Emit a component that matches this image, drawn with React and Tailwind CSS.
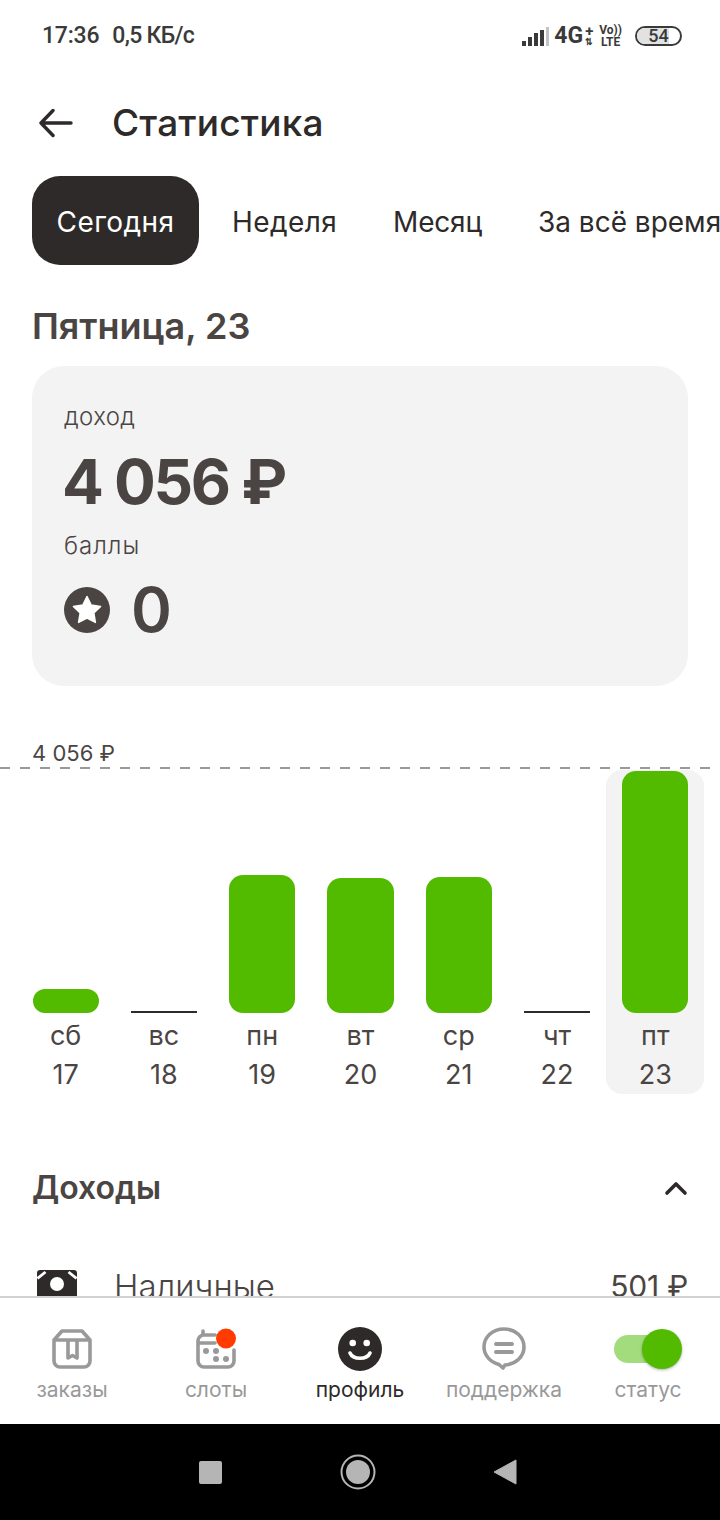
const FONT = "font-['Inter','Noto_Sans',sans-serif]";

function StatusBar() {
  return (
    <div className="h-[70px] pt-[1px] flex items-center justify-between pl-[42px] pr-[38px] text-[#3a3a3a] font-['Roboto',sans-serif]">
      <div className="flex gap-[13px] text-[23px] font-medium leading-none">
        <span className="tracking-[-0.2px]">17:36</span>
        <span className="tracking-[-0.7px]">0,5 КБ/с</span>
      </div>
      <div className="flex items-center">
        <svg width="28" height="20" viewBox="0 0 28 20" className="mr-[4px]">
          <rect x="0" y="15" width="4" height="5" fill="#3a3a3a" />
          <rect x="6" y="11" width="4" height="9" fill="#3a3a3a" />
          <rect x="12" y="7" width="4" height="13" fill="#3a3a3a" />
          <rect x="18" y="4" width="4" height="16" fill="#3a3a3a" />
          <rect x="24" y="1" width="3" height="19" fill="#c4c4c4" />
        </svg>
        <span className="text-[23px] font-bold leading-none">4G</span>
        <div className="flex flex-col items-center ml-[1px] w-[10px]">
          <span className="text-[15px] font-bold leading-[12px]">+</span>
          <span className="text-[9px] font-bold leading-[10px]">⇅</span>
        </div>
        <div className="flex flex-col items-center ml-[5px] text-[12px] font-bold leading-[12px]">
          <span>Vo))</span>
          <span>LTE</span>
        </div>
        <div className="relative ml-[13px] w-[47px] h-[20px] rounded-full border-2 border-[#3a3a3a] overflow-hidden flex items-center justify-center">
          <div className="absolute left-0 top-0 bottom-0 w-[32px] bg-[#e2e2e2]" />
          <span className="relative text-[18px] font-medium leading-none">54</span>
        </div>
      </div>
    </div>
  );
}

function Header() {
  return (
    <div className="h-[106px] flex items-center pl-[39px]">
      <svg width="34" height="30" viewBox="0 0 34 30" fill="none" stroke="#2d2a29" strokeWidth="3.4" strokeLinecap="round" strokeLinejoin="round">
        <path d="M2 15H32M14 2.500 2 15l12 12.500" />
      </svg>
      <h1 className="ml-[39px] mb-[2px] text-[37px] font-medium leading-none text-[#2d2a29] tracking-[0.2px]">Статистика</h1>
    </div>
  );
}

function Tabs() {
  return (
    <div className="flex items-center pl-[32px] gap-[9px] h-[89px] whitespace-nowrap text-[28px] tracking-[0.4px] text-[#2d2a29] overflow-hidden">
      <div className="h-[89px] w-[167px] shrink-0 flex items-center justify-center pt-[3px] rounded-[28px] bg-[#2d2a29] text-white">Сегодня</div>
      <div className="px-[24px] pt-[3px] shrink-0">Неделя</div>
      <div className="px-[24px] pt-[3px] shrink-0 -ml-[1px] tracking-[-0.2px]">Месяц</div>
      <div className="px-[24px] pt-[3px] shrink-0 -ml-[1px] tracking-[0px]">За всё время</div>
    </div>
  );
}

function Card() {
  return (
    <div className="mx-[32px] h-[320px] rounded-[32px] bg-[#f3f3f3] px-[32px] text-[#4a4543] flex flex-col">
      <div className="mt-[37px] h-[28px] text-[24px] font-light leading-[28px] tracking-[0.4px]">доход</div>
      <div className="mt-[16px] -ml-[2px] h-[70px] text-[62px] font-bold tracking-[-2.3px] leading-[70px]">4 056 ₽</div>
      <div className="mt-[15px] h-[28px] text-[24px] font-light leading-[28px] tracking-[1px]">баллы</div>
      <div className="mt-[17px] flex items-center">
        <svg width="46" height="46" viewBox="0 0 46 46">
          <circle cx="23" cy="23" r="23" fill="#4a4543" />
          <path d="M23 9.500l4.200 8.600 9.400 1.300-6.800 6.600 1.600 9.400-8.400-4.400-8.400 4.400 1.600-9.400-6.800-6.600 9.400-1.300z" fill="#fff" stroke="#fff" strokeWidth="1.500" strokeLinejoin="round" />
        </svg>
        <span className="ml-[21px] text-[62px] font-semibold leading-[66px]">0</span>
      </div>
    </div>
  );
}

const days = [
  { d: "сб", n: 17, h: 24 },
  { d: "вс", n: 18, h: 0 },
  { d: "пн", n: 19, h: 138 },
  { d: "вт", n: 20, h: 135 },
  { d: "ср", n: 21, h: 136 },
  { d: "чт", n: 22, h: 0 },
  { d: "пт", n: 23, h: 242, active: true },
];

function Chart() {
  return (
    <div className="relative mt-[52px]">
      <div className="h-[30px] pl-[32px] text-[22px] leading-[30px] text-[#4a4543]">4 056 ₽</div>
      <div className="h-[2px] -mt-[1px] bg-[repeating-linear-gradient(90deg,#999999_0,#999999_10px,transparent_10px,transparent_20px)]" />
      <div className="mt-[1px] grid grid-cols-7 pl-[16.5px] pr-[15.5px] h-[324px]">
        {days.map((x) => (
          <div key={x.n} className={"flex flex-col items-center rounded-[16px] " + (x.active ? "bg-[#f3f3f3]" : "")}>
            <div className="h-[243px] w-full px-[16px] flex flex-col justify-end">
              {x.h > 0 ? (
                <div className="w-full bg-[#52bb00] rounded-[14px]" style={{ height: x.h }} />
              ) : (
                <div className="w-full h-[2px] bg-[#2d2a29]" />
              )}
            </div>
            <div className="mt-[7px] h-[32px] text-[27px] leading-[32px] text-[#4a4543]">{x.d}</div>
            <div className="mt-[7px] h-[32px] text-[27px] leading-[32px] text-[#4a4543]">{x.n}</div>
          </div>
        ))}
      </div>
    </div>
  );
}

function Income() {
  return (
    <div className="pt-[72px] px-[32px]">
      <div className="flex items-center justify-between h-[44px]">
        <span className="text-[32px] font-semibold text-[#4a4543]">Доходы</span>
        <svg width="24" height="16" viewBox="0 0 24 16" fill="none" stroke="#2d2a29" strokeWidth="3.600" strokeLinecap="round" strokeLinejoin="round">
          <path d="M3 13 12 4l9 9" />
        </svg>
      </div>
      <div className="mt-[60px] flex items-center h-[32px]">
        <svg width="40" height="28" viewBox="0 0 40 28" className="ml-[5px] mb-[4px]">
          <rect width="40" height="28" rx="3" fill="#2d2a29" />
          <circle cx="20" cy="14" r="7" fill="#fff" />
          <path d="M0.500 8.500 8.500 2M39.500 8.500 31.500 2" stroke="#fff" strokeWidth="2.800" />
        </svg>
        <span className="ml-[37px] text-[33px] font-light leading-none text-[#4a4543]">Наличные</span>
        <span className="ml-auto text-[30px] leading-none text-[#4a4543] tracking-[-0.2px]">501 ₽</span>
      </div>
    </div>
  );
}

function NavItem({ label, active, children }) {
  return (
    <div className="flex flex-col items-center">
      <div className="h-[48px] flex items-center justify-center">{children}</div>
      <span className={"mt-[5px] text-[21px] leading-[24px] " + (active ? "text-[#2d2a29]" : "text-[#999999]")}>{label}</span>
    </div>
  );
}

function BottomNav() {
  return (
    <div className="h-[128px] shrink-0 border-t-2 border-[#d2d2d2] bg-white grid grid-cols-5 pt-[27px]">
      <NavItem label="заказы">
        <svg width="40" height="40" viewBox="0 0 40 40" fill="none" stroke="#999999" strokeWidth="3.600" strokeLinejoin="round">
          <path d="M10 2h20l8 9v21a6 6 0 0 1-6 6H8a6 6 0 0 1-6-6V11z" />
          <path d="M2 11h36" />
          <path d="M16 11v18l4.500-2.500 4.500 2.500V11" />
        </svg>
      </NavItem>
      <NavItem label="слоты">
        <svg width="40" height="40" viewBox="0 0 40 40" fill="none" className="overflow-visible">
          <path d="M19 6H8a6 6 0 0 0-6 6v20a6 6 0 0 0 6 6h24a6 6 0 0 0 6-6V21M2 14h17M7 2v4" stroke="#999999" strokeWidth="3.600" strokeLinecap="round" />
          <circle cx="10" cy="22" r="3" fill="#999999" />
          <circle cx="20" cy="22" r="3" fill="#999999" />
          <circle cx="20" cy="30" r="3" fill="#999999" />
          <circle cx="30" cy="30" r="3" fill="#999999" />
          <circle cx="30" cy="9.500" r="10" fill="#ff3b00" />
        </svg>
      </NavItem>
      <NavItem label="профиль" active>
        <svg width="44" height="44" viewBox="0 0 44 44" fill="none">
          <circle cx="22" cy="22" r="22" fill="#2d2a29" />
          <circle cx="14.700" cy="16" r="3.300" fill="#fff" />
          <circle cx="28.700" cy="16" r="3.300" fill="#fff" />
          <path d="M12 26c3 7 17 7 20 0" stroke="#fff" strokeWidth="3.600" strokeLinecap="round" />
        </svg>
      </NavItem>
      <NavItem label="поддержка">
        <svg width="44" height="44" viewBox="0 0 44 44" fill="none" stroke="#999999" strokeWidth="3.600" strokeLinejoin="round" strokeLinecap="round">
          <path d="M22 2C10.500 2 2 10 2 20c0 8 6 15 15 17.500l4 3.500 2-3c11-1 19-8.500 19-18C42 10 33.500 2 22 2z" />
          <path d="M14 17h16M14 25h16" strokeWidth="4" />
        </svg>
      </NavItem>
      <NavItem label="статус">
        <div className="relative w-[68px] h-[40px] flex items-center">
          <div className="w-[52px] h-[28px] rounded-full bg-[#a3dc7c]" />
          <div className="absolute right-0 top-0 w-[40px] h-[40px] rounded-full bg-[#52bb00] shadow-[0_1px_3px_rgba(0,0,0,0.3)]" />
        </div>
      </NavItem>
    </div>
  );
}

function SystemBar() {
  return (
    <div className="h-[96px] shrink-0 bg-black flex items-center justify-between pl-[199px] pr-[203px]">
      <div className="w-[23px] h-[23px] rounded-[2px] bg-[#b5b5b5]" />
      <svg width="36" height="36" viewBox="0 0 36 36">
        <circle cx="18" cy="18" r="16.500" fill="none" stroke="#b5b5b5" strokeWidth="2" />
        <circle cx="18" cy="18" r="12" fill="#b5b5b5" />
      </svg>
      <svg width="24" height="26" viewBox="0 0 24 26">
        <path d="M1 13 23 1v24z" fill="#b5b5b5" stroke="#b5b5b5" strokeWidth="1" strokeLinejoin="round" />
      </svg>
    </div>
  );
}

export default function App() {
  return (
    <div className={"w-[720px] h-[1520px] bg-white flex flex-col overflow-hidden " + FONT}>
      <div className="flex-1 min-h-0 overflow-hidden">
        <StatusBar />
        <Header />
        <Tabs />
        <div className="mt-[38px] mx-[32px] h-[46px] text-[36px] font-semibold leading-[46px] text-[#4a4543]">Пятница, 23</div>
        <div className="mt-[17px]"><Card /></div>
        <Chart />
        <Income />
      </div>
      <BottomNav />
      <SystemBar />
    </div>
  );
}
